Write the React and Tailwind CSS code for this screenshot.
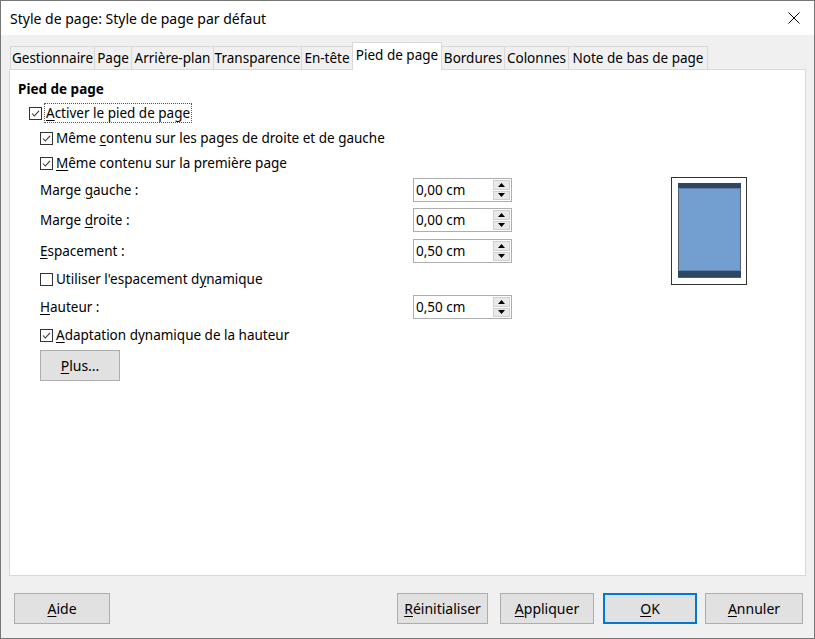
import React from "react";

const tabs = [
  { label: "Gestionnaire", w: "w-[84px]" },
  { label: "Page", w: "w-[37px]" },
  { label: "Arrière-plan", w: "w-[82px]" },
  { label: "Transparence", w: "w-[88px]" },
  { label: "En-tête", w: "w-[51px]" },
  { label: "Pied de page", w: "w-[90px]", active: true },
  { label: "Bordures", w: "w-[63px]" },
  { label: "Colonnes", w: "w-[64px]" },
  { label: "Note de bas de page", w: "w-[140px]", last: true },
];

const U = ({ children }) => <span className="underline underline-offset-2">{children}</span>;

const CheckBox = ({ checked }) => (
  <svg width="13" height="13" viewBox="0 0 13 13" className="shrink-0">
    <rect x="0.5" y="0.5" width="12" height="12" fill="#fff" stroke="#333" />
    {checked && <path d="M3 6.5 L5.3 9 L10 3.8" fill="none" stroke="#333" strokeWidth="1.1" />}
  </svg>
);

const CheckRow = ({ checked, children, className = "", focus }) => (
  <div className={`flex items-center h-[24px] ${className}`}>
    <CheckBox checked={checked} />
    <span className={`ml-[3px] leading-[18px] ${focus ? "outline outline-1 outline-dotted outline-[#555] px-px" : ""}`}>
      {children}
    </span>
  </div>
);

const SpinBox = ({ value }) => (
  <div className="flex h-[24px] w-[99px] bg-white border border-[#adadad] items-stretch">
    <div className="flex-1 pl-[2px] flex items-center">{value}</div>
    <div className="flex flex-col justify-center gap-px pr-[1px] py-[1px]">
      <div className="w-[17px] h-[10px] bg-[#e9e9e9] border border-[#d0d0d0] flex items-center justify-center">
        <svg width="7" height="4" viewBox="0 0 7 4"><path d="M0 4 L3.5 0 L7 4 Z" fill="#000" /></svg>
      </div>
      <div className="w-[17px] h-[10px] bg-[#e9e9e9] border border-[#d0d0d0] flex items-center justify-center">
        <svg width="7" height="4" viewBox="0 0 7 4"><path d="M0 0 L3.5 4 L7 0 Z" fill="#000" /></svg>
      </div>
    </div>
  </div>
);

const FieldRow = ({ label, value, className = "" }) => (
  <div className={`flex items-center h-[24px] ${className}`}>
    <div className="w-[373px]">{label}</div>
    <SpinBox value={value} />
  </div>
);

const Button = ({ children, w, primary, className = "" }) => (
  <button
    className={`h-[31px] ${w} bg-[#e1e1e1] border ${primary ? "border-[#0078d7] outline outline-1 outline-[#0078d7] -outline-offset-2" : "border-[#adadad]"} text-[14px] flex items-center justify-center ${className}`}
  >
    {children}
  </button>
);

export default function App() {
  return (
    <div
      className="w-[815px] h-[639px] border border-[#767676] bg-[#f0f0f0] flex flex-col text-[13.5px] text-black overflow-hidden"
      style={{ fontFamily: '"Noto Sans", "Open Sans", sans-serif' }}
    >
      <div className="h-[34px] bg-white flex items-center justify-between pl-[9px] pr-[14px] shrink-0">
        <span className="text-[14px]">Style de page: Style de page par défaut</span>
        <svg width="12" height="12" viewBox="0 0 12 12">
          <path d="M0.5 0.5 L11.5 11.5 M11.5 0.5 L0.5 11.5" stroke="#000" strokeWidth="1" />
        </svg>
      </div>

      <div className="flex items-end h-[28px] mt-[7px] ml-[9px] relative z-10">
        {tabs.map((t) =>
          t.active ? (
            <div
              key={t.label}
              className={`${t.w} h-[28px] bg-white border-t border-l border-r border-[#d9d9d9] flex items-center justify-center pb-[2px] -mr-px`}
            >
              {t.label}
            </div>
          ) : (
            <div
              key={t.label}
              className={`${t.w} h-[23px] mb-px bg-[#f0f0f0] border-t border-l ${t.last ? "border-r" : ""} border-[#d9d9d9] flex items-center justify-center`}
            >
              {t.label}
            </div>
          )
        )}
      </div>

      <div className="ml-[8px] w-[797px] h-[507px] -mt-px bg-white border border-[#d9d9d9] pl-[8px] pt-[8px] shrink-0">
        <div className="font-bold h-[22px] flex items-center">Pied de page</div>
        <CheckRow checked focus className="ml-[11px] mt-px">
          <U>A</U>ctiver le pied de page
        </CheckRow>
        <CheckRow checked className="ml-[22px] mt-px">
          Même <U>c</U>ontenu sur les pages de droite et de gauche
        </CheckRow>
        <CheckRow checked className="ml-[22px] mt-px">
          <U>M</U>ême contenu sur la première page
        </CheckRow>

        <div className="flex ml-[22px] mt-[3px]">
          <div className="flex flex-col">
            <FieldRow label={<>Marge <U>g</U>auche :</>} value="0,00 cm" />
            <FieldRow label={<>Marge <U>d</U>roite :</>} value="0,00 cm" className="mt-[6px]" />
            <FieldRow label={<><U>E</U>spacement :</>} value="0,50 cm" className="mt-[7px]" />
            <CheckRow className="mt-[4px]">
              Utiliser l'espacement d<U>y</U>namique
            </CheckRow>
            <FieldRow label={<><U>H</U>auteur :</>} value="0,50 cm" className="mt-[4px]" />
            <CheckRow checked className="mt-[4px]">
              <U>A</U>daptation dynamique de la hauteur
            </CheckRow>
            <Button w="w-[80px]" className="mt-[3px]">
              <span><U>P</U>lus...</span>
            </Button>
          </div>
          <div className="ml-[159px] -mt-px">
            <svg width="76" height="108" viewBox="0 0 76 108">
              <rect x="0.5" y="0.5" width="75" height="107" fill="#fff" stroke="#333" />
              <rect x="7.5" y="6.5" width="62" height="94" fill="#729fcf" stroke="#555e6b" />
              <rect x="7" y="6" width="63" height="5" fill="#2d4663" />
              <rect x="7" y="94" width="63" height="6" fill="#2d4663" />
              <line x1="7" y1="11.5" x2="70" y2="11.5" stroke="#5f7fa6" />
              <line x1="7" y1="93.5" x2="70" y2="93.5" stroke="#5f7fa6" />
            </svg>
          </div>
        </div>
      </div>

      <div className="flex items-center mt-[17px] pl-[13px] pr-[11px]">
        <Button w="w-[96px]">
          <span><U>A</U>ide</span>
        </Button>
        <div className="flex-1" />
        <Button w="w-[91px]">
          <span><U>R</U>éinitialiser</span>
        </Button>
        <Button w="w-[94px]" className="ml-[12px]">
          <span><U>A</U>ppliquer</span>
        </Button>
        <Button w="w-[94px]" primary className="ml-[9px]">
          <span><U>O</U>K</span>
        </Button>
        <Button w="w-[98px]" className="ml-[8px]">
          <span><U>A</U>nnuler</span>
        </Button>
      </div>
    </div>
  );
}
